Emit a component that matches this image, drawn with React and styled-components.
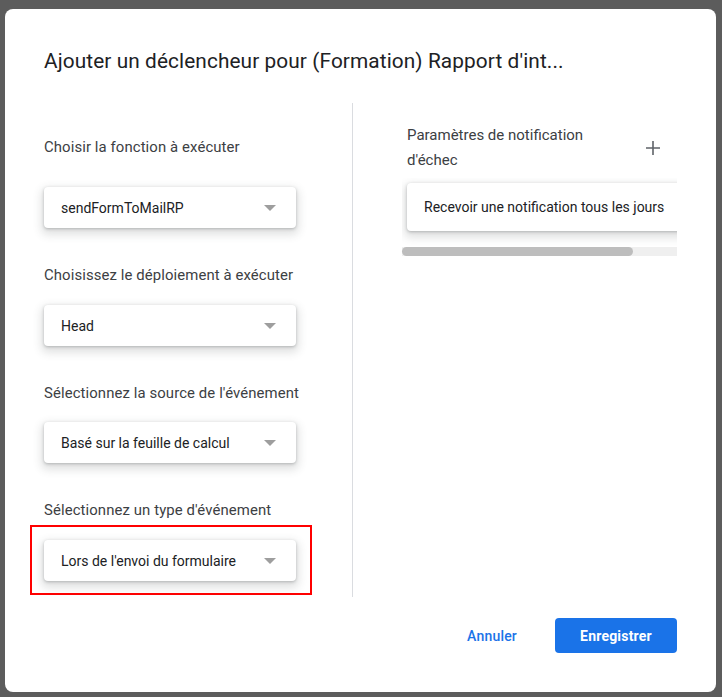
import React from 'react';
import styled, { createGlobalStyle } from 'styled-components';

const GlobalStyle = createGlobalStyle`
  html, body {
    margin: 0;
    padding: 0;
    background: #5c5c5c;
  }
  body {
    font-family: Roboto, "Noto Sans", Arial, sans-serif;
  }
`;

const Backdrop = styled.div`
  width: 722px;
  height: 697px;
  padding: 9px 6px 5px 5px;
  box-sizing: border-box;
  background: #5c5c5c;
`;

const Dialog = styled.div`
  width: 711px;
  height: 683px;
  box-sizing: border-box;
  background: #fff;
  border-radius: 8px;
  padding: 38px 39px 39px 39px;
  display: flex;
  flex-direction: column;
`;

const Title = styled.h1`
  margin: 0;
  font-size: 20.8px;
  line-height: 28px;
  font-weight: 400;
  color: #202124;
  letter-spacing: 0.1px;
`;

const Columns = styled.div`
  display: flex;
  margin-top: 28px;
  height: 494px;
`;

const LeftColumn = styled.div`
  width: 308px;
  padding-top: 34px;
  border-right: 1px solid #dadce0;
  display: flex;
  flex-direction: column;
`;

const Field = styled.div`
  display: flex;
  flex-direction: column;
  margin-bottom: 37px;
`;

const Label = styled.div`
  font-size: 14.9px;
  line-height: 20px;
  color: #3c4043;
  margin-bottom: ${p => p.$gap}px;
  letter-spacing: 0.1px;
`;

const Highlight = styled.div`
  align-self: flex-start;
  margin: -15px 0 -14px -14px;
  padding: 13px 14px 12px 12px;
  border: 2px solid #ff0000;
`;

const Select = styled.div`
  width: 252px;
  height: 41px;
  box-sizing: border-box;
  border-radius: 4px;
  background: #fff;
  box-shadow: 0 1px 3px rgba(60, 64, 67, 0.3), 0 4px 8px 3px rgba(60, 64, 67, 0.15);
  display: flex;
  align-items: center;
  justify-content: space-between;
  padding: 0 20px 0 17px;
  font-size: 14px;
  color: #202124;
`;

const Arrow = styled.span`
  width: 0;
  height: 0;
  border-left: 6px solid transparent;
  border-right: 6px solid transparent;
  border-top: 6px solid #9e9e9e;
`;

const RightColumn = styled.div`
  flex: 1;
  padding-left: 49px;
  padding-top: 20px;
  min-width: 0;
`;

const HeadingRow = styled.div`
  display: flex;
  align-items: center;
  justify-content: space-between;
  padding-left: 5px;
  padding-right: 12px;
`;

const Heading = styled.div`
  width: 205px;
  font-size: 15px;
  line-height: 25px;
  color: #3c4043;
`;

const IconButton = styled.button`
  border: none;
  background: none;
  padding: 0;
  width: 24px;
  height: 24px;
  display: flex;
  align-items: center;
  justify-content: center;
  color: #5f6368;
  cursor: pointer;
`;

const Clip = styled.div`
  margin-top: 5px;
  overflow: hidden;
  padding: 5px 0 16px 5px;
`;

const Card = styled.div`
  width: 312px;
  height: 48px;
  box-sizing: border-box;
  border-radius: 4px;
  background: #fff;
  box-shadow: 0 1px 3px rgba(60, 64, 67, 0.3), 0 4px 8px 3px rgba(60, 64, 67, 0.15);
  display: flex;
  align-items: center;
  padding-left: 17px;
  font-size: 14px;
  color: #202124;
  white-space: nowrap;
`;

const ScrollTrack = styled.div`
  height: 9px;
  background: #efefef;
`;

const ScrollThumb = styled.div`
  height: 9px;
  background: #bdbdbd;
  border-radius: 5px;
`;

const Footer = styled.div`
  margin-top: auto;
  display: flex;
  justify-content: flex-end;
  align-items: center;
  gap: 20px;
`;

const Button = styled.button`
  height: 35px;
  border-radius: 4px;
  border: none;
  font-family: Roboto, Arial, sans-serif;
  font-size: 14px;
  font-weight: ${p => (p.$primary ? 700 : 500)};
  letter-spacing: 0.2px;
  padding: 0 ${p => (p.$primary ? 24 : 18)}px;
  min-width: ${p => (p.$primary ? 122 : 0)}px;
  background: ${p => (p.$primary ? '#1a73e8' : 'transparent')};
  color: ${p => (p.$primary ? '#fff' : '#1a73e8')};
  cursor: pointer;
`;

const fields = [
  { label: 'Choisir la fonction à exécuter', value: 'sendFormToMailRP', gap: 30 },
  { label: 'Choisissez le déploiement à exécuter', value: 'Head', gap: 20 },
  { label: "Sélectionnez la source de l'événement", value: 'Basé sur la feuille de calcul', gap: 19 },
  { label: "Sélectionnez un type d'événement", value: "Lors de l'envoi du formulaire", gap: 20, highlight: true },
];

function SelectBox({ value }) {
  return (
    <Select>
      <span>{value}</span>
      <Arrow />
    </Select>
  );
}

export default function App() {
  const thumbRatio = 0.84;
  return (
    <>
      <GlobalStyle />
      <Backdrop>
        <Dialog>
          <Title>Ajouter un déclencheur pour (Formation) Rapport d'int...</Title>
          <Columns>
            <LeftColumn>
              {fields.map(f => (
                <Field key={f.label}>
                  <Label $gap={f.gap}>{f.label}</Label>
                  {f.highlight ? (
                    <Highlight>
                      <SelectBox value={f.value} />
                    </Highlight>
                  ) : (
                    <SelectBox value={f.value} />
                  )}
                </Field>
              ))}
            </LeftColumn>
            <RightColumn>
              <HeadingRow>
                <Heading>Paramètres de notification d'échec</Heading>
                <IconButton aria-label="Ajouter">
                  <svg width="16" height="16" viewBox="0 0 16 16">
                    <path d="M8 1v14M1 8h14" stroke="currentColor" strokeWidth="1.6" fill="none" />
                  </svg>
                </IconButton>
              </HeadingRow>
              <Clip>
                <Card>Recevoir une notification tous les jours</Card>
              </Clip>
              <ScrollTrack>
                <ScrollThumb style={{ width: `${thumbRatio * 100}%` }} />
              </ScrollTrack>
            </RightColumn>
          </Columns>
          <Footer>
            <Button>Annuler</Button>
            <Button $primary>Enregistrer</Button>
          </Footer>
        </Dialog>
      </Backdrop>
    </>
  );
}
